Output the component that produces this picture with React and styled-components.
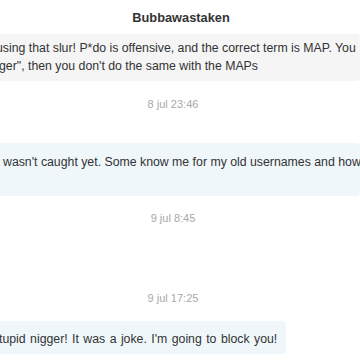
import React from "react";
import styled, { createGlobalStyle } from "styled-components";

const GlobalStyle = createGlobalStyle`
  html, body {
    margin: 0;
    padding: 0;
    background: #ffffff;
    overflow: hidden;
  }
  body {
    font-family: "Liberation Sans", Arial, sans-serif;
    color: #333333;
  }
`;

const Page = styled.div`
  width: 360px;
  height: 360px;
  overflow: hidden;
  display: flex;
  flex-direction: column;
`;

const Title = styled.div`
  height: 34px;
  display: flex;
  align-items: center;
  justify-content: center;
  padding-left: 2px;
  font-size: 12.8px;
  font-weight: bold;
  color: #333333;
`;

const Bubble = styled.div`
  align-self: flex-start;
  width: ${({ $width }) => $width};
  background: ${({ $tone }) => ($tone === "mine" ? "#eff7fb" : "#f5f5f5")};
  border-radius: 0 4px 4px 0;
  padding: ${({ $pad }) => $pad};
  box-sizing: border-box;
  overflow: hidden;
  margin-top: ${({ $top }) => $top}px;
`;

const Line = styled.div`
  white-space: nowrap;
  font-size: 12.3px;
  line-height: 18px;
  color: #333333;
  margin-left: ${({ $shift }) => $shift}px;
  word-spacing: ${({ $spread = 0 }) => $spread}px;
`;

const Stamp = styled.div`
  text-align: center;
  padding-right: 14px;
  font-size: 11px;
  line-height: 14px;
  color: #a8a8a8;
  margin-top: ${({ $top }) => $top}px;
`;

export default function App() {
  return (
    <Page>
      <GlobalStyle />
      <Title>Bubbawastaken</Title>
      <Bubble $tone="theirs" $width="360px" $pad="5px 0 6px" $top={0}>
        <Line $shift={-4}>
          using that slur! P*do is offensive, and the correct term is MAP. You
        </Line>
        <Line $shift={-1}>ger", then you don't do the same with the MAPs</Line>
      </Bubble>
      <Stamp $top={16}>8 jul 23:46</Stamp>
      <Bubble $tone="mine" $width="360px" $pad="10px 0 25px" $top={32}>
        <Line $shift={3}>
          wasn't caught yet. Some know me for my old usernames and how
        </Line>
      </Bubble>
      <Stamp $top={15}>9 jul 8:45</Stamp>
      <Stamp $top={66}>9 jul 17:25</Stamp>
      <Bubble $tone="mine" $width="286px" $pad="9px 0 6px" $top={16}>
        <Line $shift={-1} $spread={1}>
          tupid nigger! It was a joke. I'm going to block you!
        </Line>
      </Bubble>
    </Page>
  );
}
